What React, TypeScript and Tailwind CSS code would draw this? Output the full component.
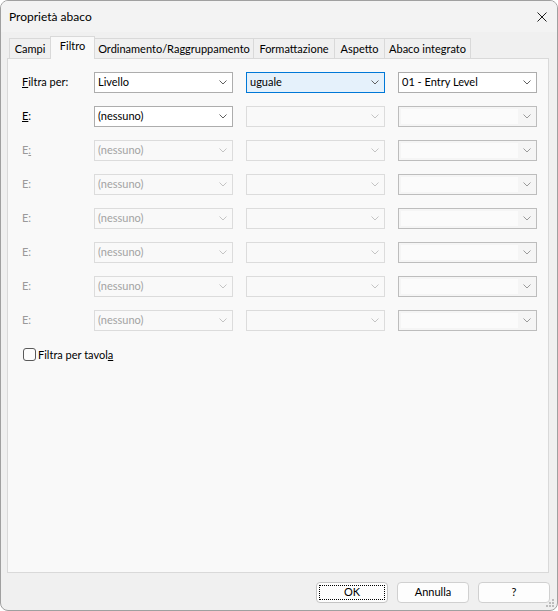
import React from "react";

type Kind = "enabled" | "focused" | "disabled" | "box";

function Chevron({ color }: { color: string }) {
  return (
    <svg width="8" height="5" viewBox="0 0 8 5" className="shrink-0">
      <path d="M0.5 0.5 L4 4 L7.5 0.5" fill="none" stroke={color} strokeWidth="1" />
    </svg>
  );
}

function Combo({ kind, text }: { kind: Kind; text?: string }) {
  if (kind === "box") {
    return (
      <div className="relative w-[139px] h-[21px] border border-[#bdbdbd] bg-[#f5f5f5] flex items-center justify-end pr-[5px]">
        <div className="absolute left-[2px] top-[2px] bottom-[2px] w-[117px] bg-[#fbfbfb]" />
        <Chevron color="#9a9a9a" />
      </div>
    );
  }
  const box =
    kind === "enabled"
      ? "w-[139px] h-[21px] border border-[#adadad] bg-white flex items-center justify-between pl-[3px] pr-[5px] text-black"
      : kind === "focused"
      ? "w-[139px] h-[21px] border border-[#0078d7] bg-[#e5f1fb] flex items-center justify-between pl-[3px] pr-[5px] text-black"
      : "w-[139px] h-[21px] border border-[#dcdcdc] bg-[#f9f9f9] flex items-center justify-between pl-[3px] pr-[5px] text-[#a3a3a3]";
  const chev = kind === "disabled" ? "#c4c4c4" : "#606060";
  return (
    <div className={box}>
      <span className="leading-none pb-[2px]">{text ?? ""}</span>
      <Chevron color={chev} />
    </div>
  );
}

function Label({ children, disabled }: { children: React.ReactNode; disabled?: boolean }) {
  return (
    <div className={disabled ? "w-[72px] text-[#9a9a9a] leading-none pb-[2px]" : "w-[72px] text-black leading-none pb-[2px]"}>
      {children}
    </div>
  );
}

function Tab({ w, label, selected }: { w: string; label: string; selected?: boolean }) {
  if (selected) {
    return (
      <div className={`${w} -ml-px h-[23px] -mb-px border-t border-l border-r border-[#d9d9d9] bg-[#f9f9f9] flex items-center justify-center pb-[3px] relative z-10`}>
        {label}
      </div>
    );
  }
  return (
    <div className={`${w} -ml-px h-[20px] border-t border-l border-r border-[#d9d9d9] bg-[#f0f0f0] flex items-center justify-center pt-[1px]`}>
      {label}
    </div>
  );
}

export default function App() {
  const disabledRows = [
    <>
      E<span className="underline">:</span>
    </>,
    "E:",
    "E:",
    "E:",
    "E:",
    "E:",
  ];
  return (
    <div className="w-[558px] h-[611px] bg-white">
      <div className="relative w-[558px] h-[611px] border border-[#a0a0a0] rounded-[8px] bg-[#f0f0f0] flex flex-col overflow-hidden text-black text-[11px] [font-family:Lato,sans-serif]">
        <div className="h-[31px] shrink-0 bg-[#f3f3f3] flex items-center justify-between pl-[8px] pr-[10px]">
          <span className="text-[12px]">Proprietà abaco</span>
          <svg width="10" height="10" viewBox="0 0 10 10">
            <path d="M0.5 0.5 L9.5 9.5 M9.5 0.5 L0.5 9.5" stroke="#1f1f1f" strokeWidth="1" fill="none" />
          </svg>
        </div>
        <div className="flex-1 flex flex-col pl-[6px] pr-[8px]">
          <div className="h-[22px] mt-[4px] pl-[3px] flex items-end relative z-10">
            <Tab w="w-[42px]" label="Campi" />
            <Tab w="w-[45px]" label="Filtro" selected />
            <Tab w="w-[160px]" label="Ordinamento/Raggruppamento" />
            <Tab w="w-[82px]" label="Formattazione" />
            <Tab w="w-[51px]" label="Aspetto" />
            <Tab w="w-[87px]" label="Abaco integrato" />
          </div>
          <div className="h-[515px] shrink-0 border border-[#d9d9d9] bg-[#f9f9f9] pt-[13px] pl-[14px] flex flex-col">
            <div className="flex flex-col gap-[13px]">
              <div className="flex items-center h-[21px]">
                <Label>
                  <span className="underline">F</span>iltra per:
                </Label>
                <div className="flex gap-[13px]">
                  <Combo kind="enabled" text="Livello" />
                  <Combo kind="focused" text="uguale" />
                  <Combo kind="enabled" text="01 - Entry Level" />
                </div>
              </div>
              <div className="flex items-center h-[21px]">
                <Label>
                  <span className="underline">E</span>:
                </Label>
                <div className="flex gap-[13px]">
                  <Combo kind="enabled" text="(nessuno)" />
                  <Combo kind="disabled" />
                  <Combo kind="box" />
                </div>
              </div>
              {disabledRows.map((l, i) => (
                <div key={i} className="flex items-center h-[21px]">
                  <Label disabled>{l}</Label>
                  <div className="flex gap-[13px]">
                    <Combo kind="disabled" text="(nessuno)" />
                    <Combo kind="disabled" />
                    <Combo kind="box" />
                  </div>
                </div>
              ))}
            </div>
            <div className="mt-[17px] ml-[1px] flex items-center h-[13px]">
              <div className="w-[13px] h-[13px] border border-[#5a5a5a] rounded-[3px] bg-[#fdfdfd]" />
              <span className="ml-[2px] leading-none pb-[1px]">
                Filtra per tavol<span className="underline">a</span>
              </span>
            </div>
          </div>
          <div className="flex justify-end gap-[9px] pt-[9px] -mr-px">
            <div className="relative w-[72px] h-[21px] rounded-[4px] border border-[#c4c4c4] bg-[#fdfdfd] flex items-center justify-center">
              <div className="absolute inset-[2px] border border-dotted border-black" />
              <span className="leading-none pb-[2px]">OK</span>
            </div>
            <div className="w-[72px] h-[21px] rounded-[4px] border border-[#d0d0d0] bg-[#fdfdfd] flex items-center justify-center">
              <span className="leading-none pb-[2px]">Annulla</span>
            </div>
            <div className="w-[72px] h-[21px] rounded-[4px] border border-[#d0d0d0] bg-[#fdfdfd] flex items-center justify-center">
              <span className="leading-none pb-[2px]">?</span>
            </div>
          </div>
        </div>
        <svg className="absolute right-[2px] bottom-[2px]" width="9" height="9" viewBox="0 0 9 9">
          <rect x="6" y="0" width="2" height="2" fill="#bdbdbd" />
          <rect x="3" y="3" width="2" height="2" fill="#bdbdbd" />
          <rect x="6" y="3" width="2" height="2" fill="#bdbdbd" />
          <rect x="0" y="6" width="2" height="2" fill="#bdbdbd" />
          <rect x="3" y="6" width="2" height="2" fill="#bdbdbd" />
          <rect x="6" y="6" width="2" height="2" fill="#bdbdbd" />
        </svg>
      </div>
    </div>
  );
}
